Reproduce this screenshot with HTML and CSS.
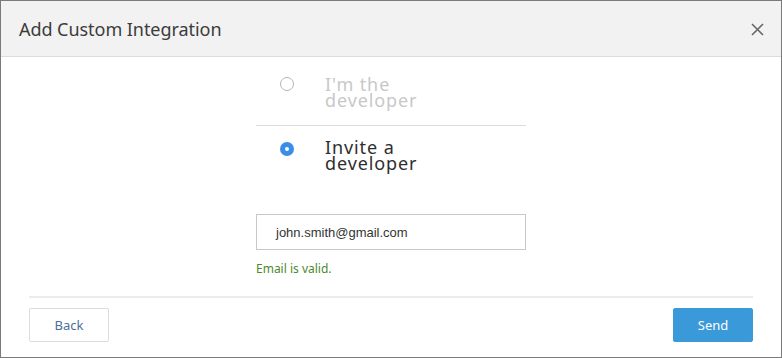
FILE: index.html
```html
<!DOCTYPE html>
<html>
<head>
<meta charset="utf-8">
<link rel="stylesheet" href="styles.css">
</head>
<body>
<div class="dialog">
  <div class="header">
    <h1 class="title">Add Custom Integration</h1>
    <button class="close" aria-label="Close">
      <svg width="13" height="13" viewBox="0 0 13 13"><path d="M1 1 L12 12 M12 1 L1 12" stroke="#666" stroke-width="1.6" fill="none"/></svg>
    </button>
  </div>
  <div class="content">
    <div class="options">
      <div class="option option-off">
        <span class="radio"></span>
        <span class="label">I'm the<br>developer</span>
      </div>
      <div class="option option-on">
        <span class="radio radio-on"></span>
        <span class="label">Invite a<br>developer</span>
      </div>
    </div>
    <div class="field">
      <div class="input">john.smith@gmail.com</div>
      <div class="valid">Email is valid.</div>
    </div>
  </div>
  <div class="footer">
    <button class="btn btn-back">Back</button>
    <button class="btn btn-send">Send</button>
  </div>
</div>
</body>
</html>
```
FILE: styles.css
```css
html, body {
  margin: 0;
  padding: 0;
  background: #fff;
}
body {
  font-family: "Noto Sans", "Open Sans", sans-serif;
}
.dialog {
  width: 782px;
  height: 358px;
  box-sizing: border-box;
  border: 1px solid #7a7a7a;
  display: flex;
  flex-direction: column;
  background: #fff;
}
.header {
  height: 55px;
  background: #f2f2f2;
  border-bottom: 1px solid #dcdcdc;
  display: flex;
  align-items: center;
  justify-content: space-between;
  padding: 0 17px 0 18px;
}
.title {
  margin: 0;
  font-size: 18px;
  font-weight: 400;
  color: #3c3c3c;
  letter-spacing: -0.05px;
}
.close {
  border: 0;
  background: none;
  padding: 0;
  width: 13px;
  height: 13px;
  display: flex;
  margin-top: 2px;
}
.content {
  flex: 1;
  display: flex;
  flex-direction: column;
  align-items: center;
}
.options {
  width: 270px;
}
.option {
  display: flex;
  align-items: flex-start;
  padding-left: 24px;
}
.option-off {
  padding-top: 19px;
  padding-bottom: 17px;
  border-bottom: 1px solid #dcdcdc;
}
.option-on {
  padding-top: 13px;
}
.radio {
  width: 14px;
  height: 14px;
  box-sizing: border-box;
  border-radius: 50%;
  border: 1.5px solid #b5b5b5;
  margin-top: 1px;
  margin-right: 31px;
  flex: none;
}
.radio-on {
  border: 0;
  background: #3b8ee6;
  position: relative;
  margin-top: 3px;
}
.radio-on::after {
  content: "";
  position: absolute;
  left: 5px;
  top: 5px;
  width: 4px;
  height: 4px;
  border-radius: 50%;
  background: #fff;
}
.label {
  font-size: 18px;
  line-height: 16px;
  letter-spacing: 0.9px;
}
.option-off .label {
  color: #c8c8c8;
}
.option-on .label {
  color: #2e2e2e;
}
.field {
  width: 270px;
  margin-top: 43px;
}
.input {
  height: 36px;
  box-sizing: border-box;
  border: 1px solid #c9c9c9;
  padding: 0 19px;
  display: flex;
  align-items: center;
  font-family: "Liberation Sans", Arial, sans-serif;
  font-size: 13px;
  color: #333;
}
.valid {
  margin-top: 10px;
  font-size: 12px;
  color: #4b8a2c;
}
.footer {
  margin: 0 28px;
  border-top: 2px solid #ececec;
  padding: 10px 0 15px;
  display: flex;
  justify-content: space-between;
}
.btn {
  width: 80px;
  height: 34px;
  border-radius: 2px;
  font-family: "Noto Sans", "Open Sans", sans-serif;
  font-size: 13px;
  padding: 0;
}
.btn-back {
  background: #fff;
  border: 1px solid #dcdcdc;
  color: #4d6e98;
}
.btn-send {
  background: #3a99d8;
  border: 1px solid #3a99d8;
  color: #fff;
}
```
